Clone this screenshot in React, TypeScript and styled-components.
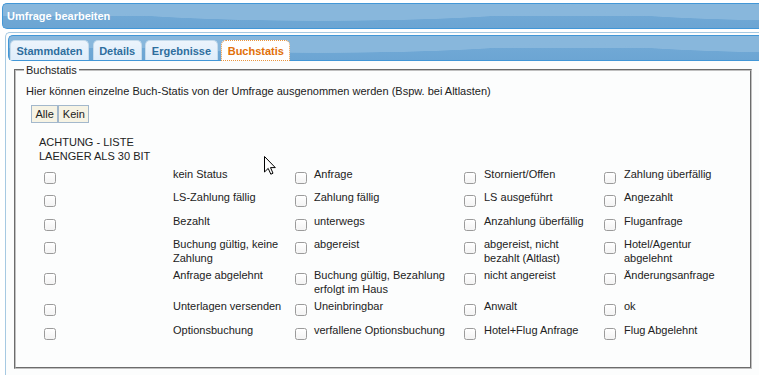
import React from 'react';
import styled, { createGlobalStyle, css } from 'styled-components';

const Global = createGlobalStyle`
  html,body{margin:0;padding:0;background:#fff;overflow:hidden}
  body{font-family:"Liberation Sans",Arial,sans-serif;font-size:11px;color:#222}
`;

// jQuery-UI like "gloss wave": light top band that dips in a wave, darker bottom
const gloss = (shift: number) => css`
  background:
    radial-gradient(ellipse 250px 17px at 250px 0, #88b7dc 97%, rgba(136,183,220,0) 100%) ${shift}px 0 / 500px 100% repeat-x,
    linear-gradient(#88b7dc 0 12px, #70a8d5 12px, #6ca5d3 100%);
`;

const Page = styled.div`position:relative;width:759px;height:375px;padding-top:3px;box-sizing:border-box;display:flex;flex-direction:column;overflow:hidden`;
const TitleBar = styled.div`margin-left:2px;height:26px;flex:none;box-sizing:border-box;border:1px solid #4297d7;border-right:none;border-radius:5px 0 0 5px;${gloss(68)};display:flex;align-items:center;padding-left:4px;color:#fff;font-weight:bold;font-size:11px`;
const Panel = styled.div`margin:3px 0 0 5px;flex:1;min-height:0;border:1px solid #a6c9e2;border-right:none;border-bottom:none;border-radius:5px 0 0 0;padding:2px 0 0 2px;background:#fcfdfd`;
const Nav = styled.div`height:26px;box-sizing:border-box;border:1px solid #4297d7;border-right:none;border-radius:5px 0 0 5px;${gloss(62)};display:flex;align-items:flex-end;gap:3.6px;padding-left:1px`;
const Tab = styled.div<{ active?: boolean }>`
  height:${({active})=>active?'21px':'20px'};margin-bottom:${({active})=>active?'-1px':'0'};box-sizing:border-box;
  display:flex;align-items:center;padding:0 5.5px;line-height:14px;font-weight:bold;font-size:11px;
  border-radius:5px 5px 0 0;position:relative;
  color:${({active})=>active?'#e17009':'#2e6e9e'};
  background:${({active})=>active?'#fff':'linear-gradient(#ecf4fc,#dfedfa)'};
  border:${({active})=>active?'1px dotted #e8953f':'1px solid #c5dbec'};
  border-bottom:${({active})=>active?'1px dotted #e8953f':'none'};
`;
const Content = styled.div`padding:2px 0 0 6px`;
const Fieldset = styled.fieldset`margin:0;width:738px;box-sizing:border-box;padding:6.5px 10px 22px;border:2px groove #c0c0c0;min-inline-size:0`;
const Legend = styled.legend`padding:0 2px;margin-left:-2px;line-height:14px;font-size:11px`;
const Intro = styled.div`line-height:14px`;
const Buttons = styled.div`display:flex;margin:7px 0 0 5px`;
const Btn = styled.div`height:18px;box-sizing:border-box;display:flex;align-items:center;padding:0 3.5px;border:1px solid #a3b8cc;background:#f6f3e4;color:#222;font-size:11px`;
const Warning = styled.div`margin:12.5px 0 2px 13px;line-height:14px`;
const Row = styled.div`display:grid;grid-template-columns:147px 118px 23px 146px 24px 116px 24px 1fr`;
const CheckCell = styled.div<{ first?: boolean }>`padding:6.5px 0 5px ${({first})=>first?'18px':'4px'}`;
const Box = styled.span`display:block;width:12px;height:12px;box-sizing:border-box;border:1px solid #9b9b9b;border-radius:2.5px;background:linear-gradient(#fff,#f3f3f3)`;
const Label = styled.div`padding:1.5px 6px 1.5px 0;line-height:14px`;
const Cursor = styled.svg`position:absolute;left:264px;top:156px;width:12px;height:19px`;

const rows = [
  ['kein Status', 'Anfrage', 'Storniert/Offen', 'Zahlung überfällig'],
  ['LS-Zahlung fällig', 'Zahlung fällig', 'LS ausgeführt', 'Angezahlt'],
  ['Bezahlt', 'unterwegs', 'Anzahlung überfällig', 'Fluganfrage'],
  ['Buchung gültig, keine Zahlung', 'abgereist', 'abgereist, nicht bezahlt (Altlast)', 'Hotel/Agentur abgelehnt'],
  ['Anfrage abgelehnt', 'Buchung gültig, Bezahlung erfolgt im Haus', 'nicht angereist', 'Änderungsanfrage'],
  ['Unterlagen versenden', 'Uneinbringbar', 'Anwalt', 'ok'],
  ['Optionsbuchung', 'verfallene Optionsbuchung', 'Hotel+Flug Anfrage', 'Flug Abgelehnt'],
];

const tabs = ['Stammdaten', 'Details', 'Ergebnisse', 'Buchstatis'];

export default function App() {
  return (
    <Page>
      <Global />
      <TitleBar>Umfrage bearbeiten</TitleBar>
      <Panel>
        <Nav>
          {tabs.map(t => <Tab key={t} active={t === 'Buchstatis'}>{t}</Tab>)}
        </Nav>
        <Content>
          <Fieldset>
            <Legend>Buchstatis</Legend>
            <Intro>Hier können einzelne Buch-Statis von der Umfrage ausgenommen werden (Bspw. bei Altlasten)</Intro>
            <Buttons><Btn>Alle</Btn><Btn>Kein</Btn></Buttons>
            <Warning>ACHTUNG - LISTE<br />LAENGER ALS 30 BIT</Warning>
            {rows.map((r, i) => (
              <Row key={i}>
                {r.map((l, j) => (
                  <React.Fragment key={j}>
                    <CheckCell first={j === 0}><Box /></CheckCell>
                    <Label>{l}</Label>
                  </React.Fragment>
                ))}
              </Row>
            ))}
          </Fieldset>
        </Content>
      </Panel>
      <Cursor viewBox="0 0 12 19">
        <path d="M0.5 0.5 L0.5 16 L4.2 12.4 L6.8 18.2 L9 17.2 L6.5 11.6 L11.3 11.6 Z" fill="#fff" stroke="#000" strokeWidth="1" strokeLinejoin="round" />
      </Cursor>
    </Page>
  );
}
